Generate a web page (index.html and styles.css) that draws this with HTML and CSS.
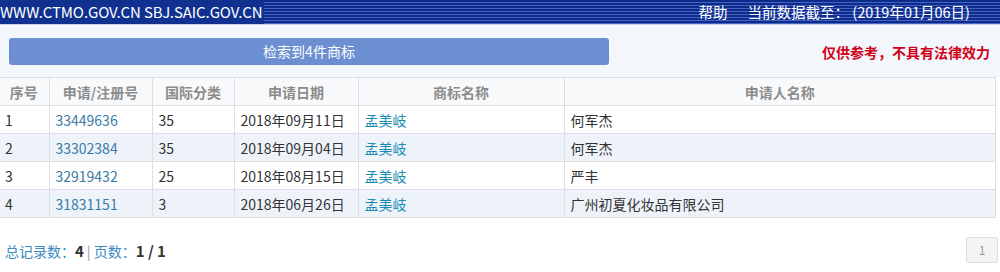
FILE: index.html
```html
<!DOCTYPE html>
<html lang="zh">
<head>
<meta charset="utf-8">
<link rel="stylesheet" href="styles.css">
</head>
<body>
<div class="topbar">
  <div class="site">WWW.CTMO.GOV.CN SBJ.SAIC.GOV.CN</div>
  <div class="topright"><span class="help">帮助</span><span class="date">当前数据截至： (2019年01月06日)</span></div>
</div>
<div class="toolbar">
  <div class="result">检索到4件商标</div>
  <div class="notice">仅供参考，不具有法律效力</div>
</div>
<table class="grid">
  <colgroup>
    <col style="width:49px"><col style="width:103px"><col style="width:82px"><col style="width:124px"><col style="width:206px"><col>
  </colgroup>
  <thead>
    <tr><th>序号</th><th>申请/注册号</th><th>国际分类</th><th>申请日期</th><th>商标名称</th><th>申请人名称</th></tr>
  </thead>
  <tbody>
    <tr><td>1</td><td class="num">33449636</td><td>35</td><td>2018年09月11日</td><td class="tm">孟美岐</td><td>何军杰</td></tr>
    <tr class="alt"><td>2</td><td class="num">33302384</td><td>35</td><td>2018年09月04日</td><td class="tm">孟美岐</td><td>何军杰</td></tr>
    <tr><td>3</td><td class="num">32919432</td><td>25</td><td>2018年08月15日</td><td class="tm">孟美岐</td><td>严丰</td></tr>
    <tr class="alt"><td>4</td><td class="num">31831151</td><td>3</td><td>2018年06月26日</td><td class="tm">孟美岐</td><td>广州初夏化妆品有限公司</td></tr>
  </tbody>
</table>
<div class="footer">
  <div class="stats"><span class="lbl">总记录数：</span><b>4</b><span class="sep">|</span><span class="lbl">页数：</span><b>1 / 1</b></div>
  <div class="pager"><span class="page">1</span></div>
</div>
</body>
</html>
```
FILE: styles.css
```css
html, body {
  margin: 0;
  padding: 0;
  background: #ffffff;
  font-family: "Noto Sans CJK SC", "Noto Sans", "Liberation Sans", sans-serif;
  font-size: 14px;
  color: #333;
}
.topbar {
  height: 24px;
  display: flex;
  align-items: center;
  justify-content: space-between;
  background: repeating-linear-gradient(to bottom, #0f2b8a 0px, #0f2b8a 2px, #4264c4 2px, #4264c4 3px);
  color: #fff;
  border-bottom: 1px solid #c9d4ea;
}
.site {
  background: #10318f;
  padding: 0 2px 0 0;
  height: 24px;
  line-height: 24px;
  font-size: 15px;
  letter-spacing: -0.1px;
}
.topright {
  display: flex;
  gap: 20px;
  padding-right: 30px;
  font-size: 14.5px;
  line-height: 24px;
}
.toolbar {
  height: 52px;
  background: #f3f6fa;
  display: flex;
  align-items: center;
  justify-content: space-between;
  padding: 0 10px 0 9px;
}
.result {
  width: 600px;
  height: 27px;
  line-height: 27px;
  margin-top: 1px;
  background: #6b8fd1;
  border-radius: 3px;
  color: #fff;
  text-align: center;
  font-size: 14px;
}
.notice {
  color: #d0021b;
  font-weight: bold;
  font-size: 14px;
  margin-top: 2px;
}
.grid {
  width: 996px;
  border-collapse: collapse;
  table-layout: fixed;
  border-top: 1px solid #dcdfe5;
  border-right: 1px solid #dcdfe5;
}
.grid th, .grid td {
  height: 27px;
  border: 1px solid #dcdfe5;
  padding: 0 6px;
  white-space: nowrap;
  font-size: 14px;
}
.grid th:first-child, .grid td:first-child { border-left: none; padding-left: 5px; }
.grid th {
  background: #f8f9fb;
  color: #8c8c8c;
  font-weight: bold;
  text-align: center;
}
.grid td { color: #333; }
.grid tr.alt td { background: #eef3fa; }
.grid td.num { color: #3a7aa6; }
.grid td.tm { color: #1a8cb2; }
.footer {
  display: flex;
  justify-content: space-between;
  align-items: center;
  padding: 19px 2px 0 5px;
}
.stats { font-size: 14px; }
.stats .lbl { color: #3b8ac4; }
.stats b { color: #333; font-size: 15px; }
.stats .sep { color: #999; margin: 0 3px; }
.page {
  display: inline-block;
  width: 30px;
  height: 24px;
  line-height: 24px;
  text-align: center;
  background: #f4f4f6;
  border: 1px solid #dddddd;
  border-radius: 2px;
  color: #999;
  font-size: 12px;
}
```
